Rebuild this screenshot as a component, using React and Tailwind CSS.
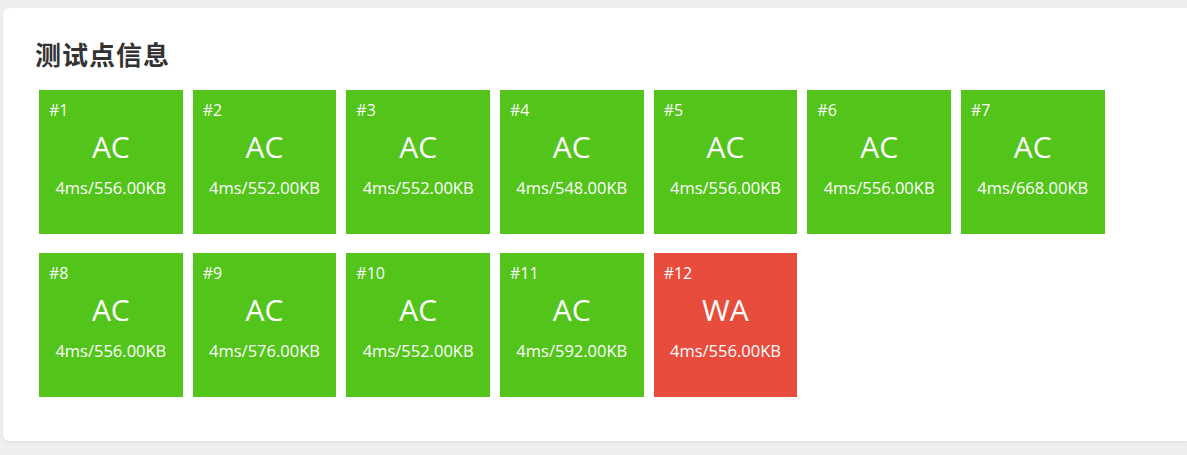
const cases = [
  { id: 1, status: 'AC', info: '4ms/556.00KB' },
  { id: 2, status: 'AC', info: '4ms/552.00KB' },
  { id: 3, status: 'AC', info: '4ms/552.00KB' },
  { id: 4, status: 'AC', info: '4ms/548.00KB' },
  { id: 5, status: 'AC', info: '4ms/556.00KB' },
  { id: 6, status: 'AC', info: '4ms/556.00KB' },
  { id: 7, status: 'AC', info: '4ms/668.00KB' },
  { id: 8, status: 'AC', info: '4ms/556.00KB' },
  { id: 9, status: 'AC', info: '4ms/576.00KB' },
  { id: 10, status: 'AC', info: '4ms/552.00KB' },
  { id: 11, status: 'AC', info: '4ms/592.00KB' },
  { id: 12, status: 'WA', info: '4ms/556.00KB' },
];

function CaseTile({ id, status, info }) {
  const bg = status === 'AC' ? 'bg-[#52c41a]' : 'bg-[#e74c3c]';
  return (
    <div className={`${bg} w-[143.67px] h-[144px] text-white flex flex-col px-[10px] pt-[10px]`}>
      <div className="text-[16px] leading-[20px]">#{id}</div>
      <div className="text-center text-[30px] leading-[36px] mt-[9px]">{status}</div>
      <div className="text-center text-[16.5px] leading-[20px] mt-[13px] whitespace-nowrap">{info}</div>
    </div>
  );
}

export default function App() {
  return (
    <div className="min-h-[455px] bg-[#eeeeee] pt-[8px] pl-[3px] font-['Open_Sans','Noto_Sans_CJK_SC',sans-serif]">
      <div className="bg-white rounded-l-[6px] shadow-[0_1px_3px_rgba(0,0,0,0.08)] pl-[32px] pt-[28px] pb-[44px]">
        <h2 className="text-[26px] leading-[38px] font-bold text-[#333333] tracking-[1px]">测试点信息</h2>
        <div className="flex flex-wrap gap-x-[10px] gap-y-[19px] pl-[4px] mt-[16px] w-[1100px]">
          {cases.map((c) => (
            <CaseTile key={c.id} {...c} />
          ))}
        </div>
      </div>
    </div>
  );
}
